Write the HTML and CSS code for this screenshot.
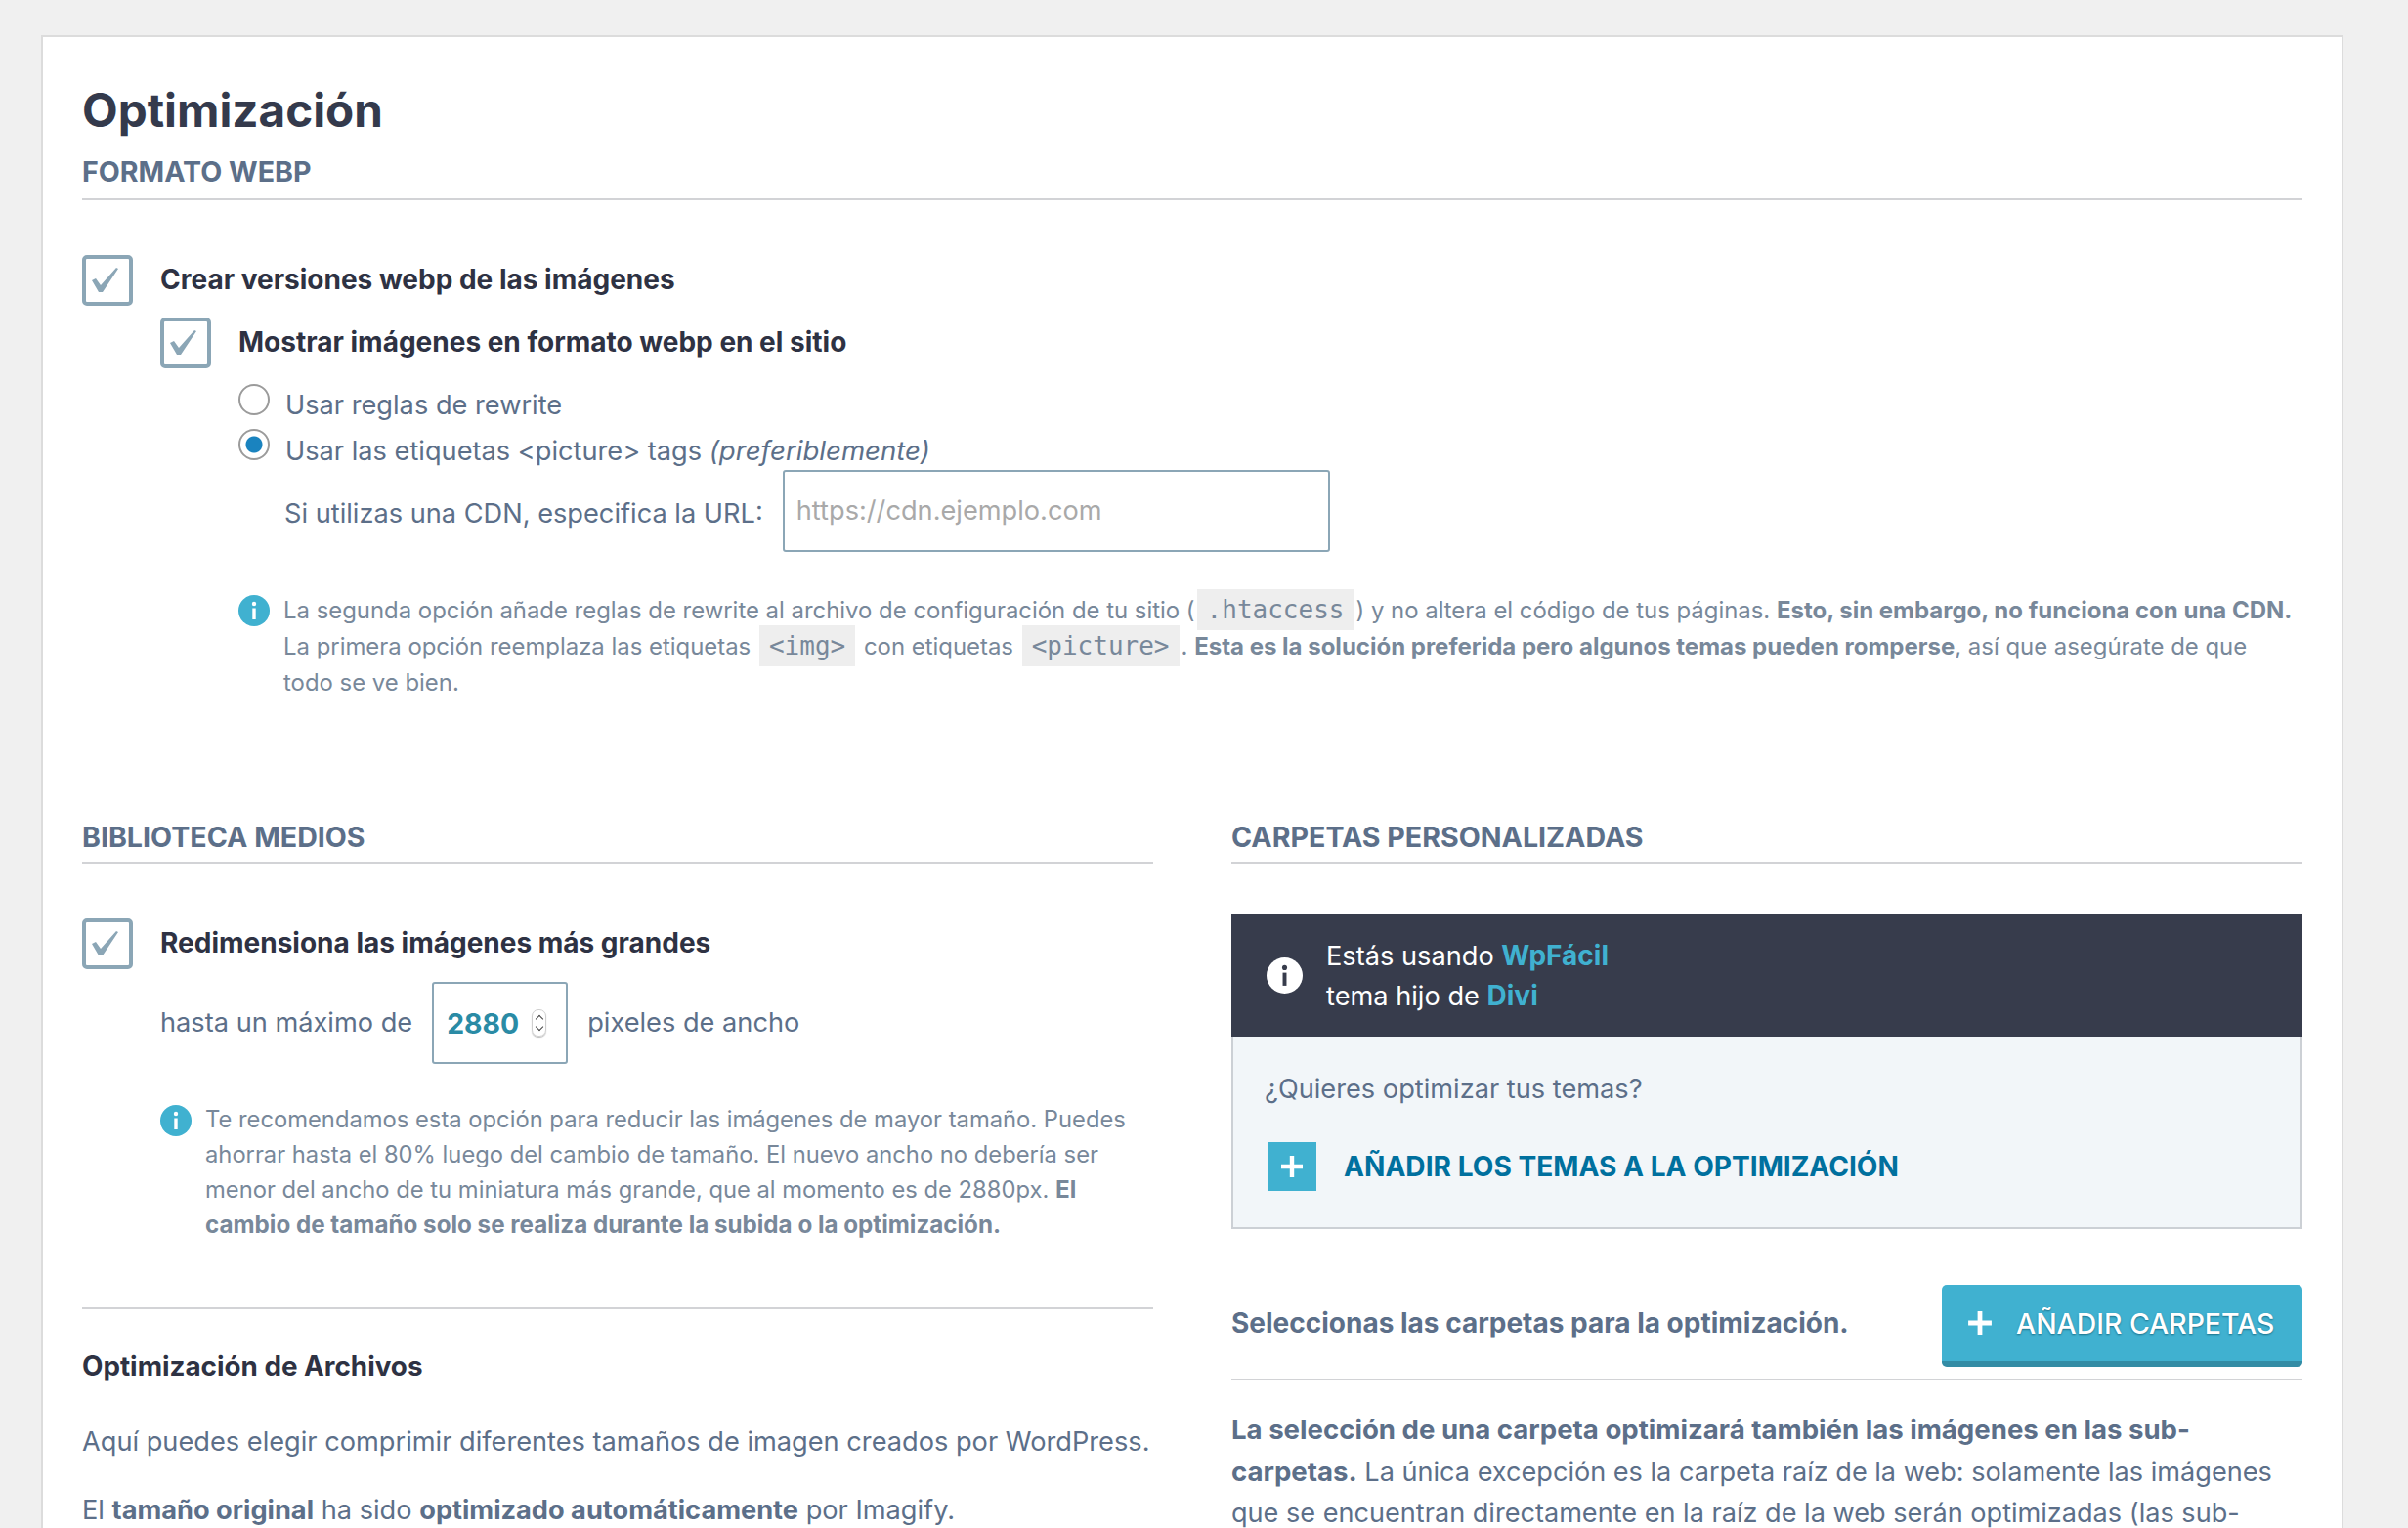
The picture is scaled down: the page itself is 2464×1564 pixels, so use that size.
FILE: index.html
```html
<!DOCTYPE html>
<html lang="es">
<head>
    <meta charset="UTF-8">
    <title>Optimización</title>
    <link rel="stylesheet" href="styles.css">
</head>
<body>
    <svg class="sprite" width="0" height="0">
        <symbol id="tick" viewBox="0 0 44 44">
            <path d="M6 22 L10 20 L15 27 L31 9 L33 10 L17 34 L13 34 Z" fill="#8ba6b6"/>
        </symbol>
        <symbol id="info" viewBox="0 0 32 32">
            <circle cx="16" cy="16" r="16" fill="currentColor"/>
            <circle cx="16" cy="9" r="2.2" fill="var(--mark)"/>
            <rect x="14.3" y="13.5" width="3.4" height="11.5" fill="var(--mark)"/>
        </symbol>
        <symbol id="plus" viewBox="0 0 24 24">
            <path d="M12 1 V23 M1 12 H23" fill="none" stroke="#fff" stroke-width="4.4"/>
        </symbol>
    </svg>

    <div class="card">
        <h1 class="page-title">Optimización</h1>

        <h2 class="section-title">FORMATO WEBP</h2>

        <div class="check-row first-check">
            <span class="checkbox"><svg><use href="#tick"/></svg></span>
            <span class="check-label">Crear versiones webp de las imágenes</span>
        </div>

        <div class="webp-options">
            <div class="check-row">
                <span class="checkbox"><svg><use href="#tick"/></svg></span>
                <span class="check-label">Mostrar imágenes en formato webp en el sitio</span>
            </div>

            <div class="radio-list">
                <div class="radio-row">
                    <span class="radio"></span>
                    <span class="radio-label">Usar reglas de rewrite</span>
                </div>
                <div class="radio-row">
                    <span class="radio selected"></span>
                    <span class="radio-label">Usar las etiquetas &lt;picture&gt; tags <em>(preferiblemente)</em></span>
                </div>
                <div class="cdn-row">
                    <label for="cdnUrl">Si utilizas una CDN, especifica la URL:</label>
                    <input type="text" id="cdnUrl" class="cdn-input" placeholder="https://cdn.ejemplo.com">
                </div>
            </div>

            <div class="note webp-note">
                <svg class="note-icon"><use href="#info"/></svg>
                <p>La segunda opción añade reglas de rewrite al archivo de configuración de tu sitio (<code>.htaccess</code>) y no altera el código de tus páginas. <strong>Esto, sin embargo, no funciona con una CDN.</strong><br>La primera opción reemplaza las etiquetas <code>&lt;img&gt;</code> con etiquetas <code>&lt;picture&gt;</code>. <strong>Esta es la solución preferida pero algunos temas pueden romperse</strong>, así que asegúrate de que todo se ve bien.</p>
            </div>
        </div>

        <div class="columns">
            <section>
                <h2 class="section-title tight">BIBLIOTECA MEDIOS</h2>

                <div class="check-row first-check">
                    <span class="checkbox"><svg><use href="#tick"/></svg></span>
                    <span class="check-label">Redimensiona las imágenes más grandes</span>
                </div>

                <div class="resize-row">
                    <span class="resize-text">hasta un máximo de</span>
                    <div class="number-input">
                        <span class="number-value">2880</span>
                        <span class="spinner"></span>
                    </div>
                    <span class="resize-text">pixeles de ancho</span>
                </div>

                <div class="note resize-note">
                    <svg class="note-icon"><use href="#info"/></svg>
                    <p>Te recomendamos esta opción para reducir las imágenes de mayor tamaño. Puedes ahorrar hasta el 80% luego del cambio de tamaño. El nuevo ancho no debería ser menor del ancho de tu miniatura más grande, que al momento es de 2880px. <strong>El cambio de tamaño solo se realiza durante la subida o la optimización.</strong></p>
                </div>

                <div class="files-block">
                    <h3 class="files-title">Optimización de Archivos</h3>
                    <p class="body-text">Aquí puedes elegir comprimir diferentes tamaños de imagen creados por WordPress.</p>
                    <p class="body-text">El <strong>tamaño original</strong> ha sido <strong>optimizado automáticamente</strong> por Imagify.</p>
                </div>
            </section>

            <section>
                <h2 class="section-title tight">CARPETAS PERSONALIZADAS</h2>

                <div class="theme-head">
                    <svg class="theme-icon"><use href="#info"/></svg>
                    <p>Estás usando <b>WpFácil</b><br>tema hijo de <b>Divi</b></p>
                </div>
                <div class="theme-body">
                    <p>¿Quieres optimizar tus temas?</p>
                    <a class="theme-link" href="#">
                        <span class="plus-box"><svg><use href="#plus"/></svg></span>
                        AÑADIR LOS TEMAS A LA OPTIMIZACIÓN
                    </a>
                </div>

                <div class="folders-row">
                    <span class="folders-text">Seleccionas las carpetas para la optimización.</span>
                    <button type="button" class="add-button"><svg><use href="#plus"/></svg>AÑADIR CARPETAS</button>
                </div>

                <p class="folders-help"><strong>La selección de una carpeta optimizará también las imágenes en las sub-carpetas.</strong> La única excepción es la carpeta raíz de la web: solamente las imágenes que se encuentran directamente en la raíz de la web serán optimizadas (las sub-</p>
            </section>
        </div>
    </div>
</body>
</html>
```

FILE: styles.css
```css
html, body {
    height: 100%;
    overflow: hidden;
}

body {
    margin: 0;
    background-color: #f0f0f0;
    font-family: 'Inter', 'Liberation Sans', sans-serif;
    font-size: 27.2px;
    color: #5c6f89;
}

.sprite {
    position: absolute;
}

.card {
    width: 2272px;
    margin: 36px 0 0 42px;
    padding: 47px 40px 0;
    background-color: #fff;
    border: 2px solid #dcdcdc;
}

.page-title {
    margin: 0;
    font-size: 47.6px;
    line-height: 56px;
    font-weight: 700;
    color: #343a4c;
}

.section-title {
    margin: 17px 0 0;
    padding-bottom: 9px;
    border-bottom: 2px solid #d2d3d6;
    font-size: 28.6px;
    line-height: 36px;
    font-weight: 700;
    color: #5c6f89;
}

.section-title.tight {
    margin-top: 0;
    padding-bottom: 7px;
}

.check-row {
    display: flex;
    align-items: center;
    gap: 28px;
}

.first-check {
    margin-top: 56px;
}

.checkbox {
    width: 44px;
    height: 44px;
    border: 4px solid #8ba6b6;
    border-radius: 5px;
    flex: none;
}

.checkbox svg {
    display: block;
    width: 44px;
    height: 44px;
}

.check-label {
    margin-bottom: 2px;
    font-size: 28px;
    font-weight: 700;
    color: #2e3243;
}

.webp-options {
    margin: 12px 0 0 80px;
}

.radio-list {
    margin: 16px 0 0 80px;
    display: flex;
    flex-direction: column;
    gap: 4px;
}

.radio-row {
    display: flex;
    align-items: flex-start;
    gap: 16px;
    height: 42px;
}

.radio {
    box-sizing: border-box;
    width: 32px;
    height: 32px;
    border: 2px solid #9b9b9b;
    border-radius: 50%;
    background-color: #fff;
    flex: none;
}

.radio.selected {
    background: radial-gradient(circle, #1a83bf 0 8px, #fff 9px);
}

.radio-label {
    line-height: 44px;
}

.radio-label em {
    font-size: 27.6px;
}

.cdn-row {
    display: flex;
    align-items: center;
    gap: 20px;
    margin: -4px 0 0 47px;
}

.cdn-row label {
    padding-top: 5px;
}

.cdn-input {
    box-sizing: border-box;
    width: 560px;
    height: 84px;
    padding: 0 12px 2px 12px;
    border: 2px solid #8ba6b6;
    border-radius: 3px;
    font-family: inherit;
    font-size: 27.2px;
    color: #5c6f89;
}

.cdn-input::placeholder {
    color: #a9a9a9;
    opacity: 1;
}

.note {
    position: relative;
    color: #78889a;
    font-size: 23.9px;
    line-height: 37px;
}

.note p {
    margin: 0;
}

.note strong {
    font-size: 24px;
    font-weight: 700;
}

.note-icon {
    position: absolute;
    left: 0;
    top: 3px;
    width: 32px;
    height: 32px;
    color: #40b1d0;
    --mark: #fff;
}

.webp-note {
    margin: 41px 0 0 80px;
    padding-left: 46px;
}

code {
    margin: 0 2px;
    padding: 6px 10px;
    font-family: 'DejaVu Sans Mono', monospace;
    font-size: 26px;
    background-color: #eeeeee;
}

.columns {
    display: grid;
    grid-template-columns: 1096px 1096px;
    column-gap: 80px;
    margin-top: 122px;
}

.resize-row {
    display: flex;
    align-items: center;
    gap: 20px;
    margin: 13px 0 0 80px;
}

.resize-text {
    margin-bottom: 2px;
}

.number-input {
    box-sizing: border-box;
    display: flex;
    align-items: center;
    justify-content: space-between;
    width: 139px;
    height: 84px;
    padding: 0 20px 0 13px;
    border: 2px solid #8ba6b6;
    border-radius: 3px;
}

.number-value {
    font-size: 28.4px;
    font-weight: 700;
    color: #2a8ba5;
}

.spinner {
    position: relative;
    box-sizing: border-box;
    width: 15px;
    height: 28px;
    border: 1px solid #cfcfcf;
    border-radius: 7px;
    box-shadow: 0 1px 1px #bdbdbd;
}

.spinner::before,
.spinner::after {
    content: "";
    position: absolute;
    left: 4px;
    width: 5px;
    height: 5px;
    border-left: 1px solid #444;
    border-top: 1px solid #444;
}

.spinner::before {
    top: 6px;
    transform: rotate(45deg);
}

.spinner::after {
    bottom: 6px;
    transform: rotate(225deg);
}

.resize-note {
    margin: 39px 0 0 80px;
    padding-left: 46px;
    font-size: 23.75px;
    line-height: 36px;
}

.resize-note strong {
    font-size: 24.2px;
}

.files-block {
    margin-top: 66px;
    padding-top: 40px;
    border-top: 2px solid #d2d3d6;
}

.files-title {
    margin: 0;
    font-size: 27.8px;
    line-height: 36px;
    font-weight: 700;
    color: #2e3243;
}

.body-text {
    margin: 42px 0 0;
    line-height: 36px;
}

.body-text + .body-text {
    margin-top: 34px;
}

.body-text strong {
    font-weight: 700;
}

.theme-head {
    display: flex;
    align-items: center;
    gap: 24px;
    height: 125px;
    margin-top: 52px;
    padding-left: 36px;
    background-color: #373c4c;
    color: #fff;
    line-height: 41px;
}

.theme-head p {
    margin: 0;
}

.theme-head b {
    font-size: 28px;
    font-weight: 700;
    color: #40b1d0;
}

.theme-icon {
    width: 37px;
    height: 37px;
    color: #fff;
    --mark: #373c4c;
}

.theme-body {
    box-sizing: border-box;
    height: 197px;
    padding: 36px 32px 0;
    background-color: #f2f6f9;
    border: 2px solid #ccd0d5;
    border-top: none;
}

.theme-body p {
    margin: 0;
    line-height: 36px;
}

.theme-link {
    display: flex;
    align-items: center;
    gap: 28px;
    margin: 36px 0 0 3px;
    font-size: 28.1px;
    font-weight: 700;
    color: #00709e;
    text-decoration: none;
}

.plus-box {
    display: flex;
    align-items: center;
    justify-content: center;
    width: 50px;
    height: 50px;
    background-color: #40b1d0;
}

.plus-box svg {
    width: 24px;
    height: 24px;
}

.folders-row {
    display: flex;
    align-items: center;
    justify-content: space-between;
    margin-top: 57px;
    padding-bottom: 12px;
    border-bottom: 2px solid #d2d3d6;
}

.folders-text {
    margin-bottom: 6px;
    font-size: 28px;
    font-weight: 700;
}

.add-button {
    display: flex;
    align-items: center;
    gap: 24px;
    box-sizing: border-box;
    width: 369px;
    height: 84px;
    padding: 0 0 0 26px;
    border: none;
    border-bottom: 6px solid #338ca5;
    border-radius: 5px;
    background-color: #40b1d0;
    color: #fff;
    font-family: inherit;
    font-size: 28.4px;
    font-weight: 500;
    white-space: nowrap;
    text-shadow: 0 1px 2px #1a6f88;
}

.add-button svg {
    width: 26px;
    height: 26px;
    flex: none;
}

.folders-help {
    margin: 29px 0 0;
    font-size: 27.1px;
    line-height: 42px;
}

.folders-help strong {
    font-size: 27.6px;
    font-weight: 700;
}
```
